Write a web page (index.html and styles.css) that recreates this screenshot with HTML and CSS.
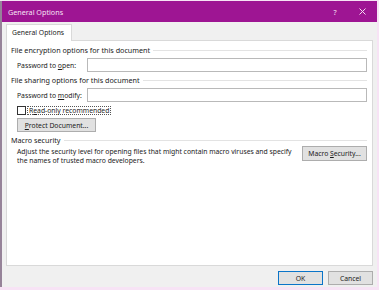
FILE: index.html
```html
<!DOCTYPE html>
<html lang="en">
<head>
    <meta charset="UTF-8">
    <title>General Options</title>
    <link rel="stylesheet" href="styles.css">
</head>
<body>
    <div class="window">
        <!-- Title Bar -->
        <div class="titlebar">
            <span class="title">General Options</span>
            <span class="help">?</span>
            <span class="close">
                <svg width="7" height="7" viewBox="0 0 7 7"><path d="M0.5 0.5L6.5 6.5M6.5 0.5L0.5 6.5" stroke="#f4dcf1" stroke-width="1"/></svg>
            </span>
        </div>

        <div class="dialog-body">
            <div class="tabs">
                <div class="tab">General Options</div>
            </div>

            <div class="panel">
                <div class="group-title"><span>File encryption options for this document</span></div>
                <div class="field">
                    <label>Password to <u>o</u>pen:</label>
                    <input type="password">
                </div>

                <div class="group-title second"><span>File sharing options for this document</span></div>
                <div class="field">
                    <label>Password to <u>m</u>odify:</label>
                    <input type="password">
                </div>

                <div class="check-row">
                    <span class="checkbox"></span>
                    <span class="check-label">R<u>e</u>ad-only recommended</span>
                </div>
                <button class="btn protect"><u>P</u>rotect Document...</button>

                <div class="group-title macro"><span>Macro security</span></div>
                <div class="macro-row">
                    <p class="macro-text">Adjust the security level for opening files that might contain macro viruses and specify the names of trusted macro developers.</p>
                    <button class="btn macro-btn">Macro <u>S</u>ecurity...</button>
                </div>
            </div>

            <!-- Footer Buttons -->
            <div class="footer">
                <button class="btn ok">OK</button>
                <button class="btn">Cancel</button>
            </div>
        </div>
    </div>
</body>
</html>
```

FILE: styles.css
```css
* {
    margin: 0;
    padding: 0;
    box-sizing: border-box;
}

body {
    font-family: 'Noto Sans', 'Open Sans', sans-serif;
    font-size: 6.8px;
    color: #1a1a1a;
    background: #f7e3f5;
    width: 379px;
    height: 290px;
    overflow: hidden;
    padding-top: 1px;
}

.window {
    width: 377px;
    height: 286px;
    border-left: 2px solid #968399;
    display: flex;
    flex-direction: column;
}

/* Title Bar */
.titlebar {
    height: 21px;
    background: #9e1593;
    color: #f7e4f4;
    display: flex;
    align-items: center;
    padding-left: 6px;
    font-size: 7.2px;
}

.title {
    flex: 1;
}

.help {
    width: 10px;
    text-align: center;
    margin-right: 19px;
}

.close {
    display: flex;
    margin-right: 11px;
}

/* Dialog Body */
.dialog-body {
    flex: 1;
    background: #f0f0f0;
    padding: 2px 4px 0 4px;
    display: flex;
    flex-direction: column;
}

.tabs {
    display: flex;
    height: 16px;
}

.tab {
    width: 66px;
    height: 17px;
    background: #fff;
    border: 1px solid #d9d9d9;
    border-bottom: none;
    padding-left: 5px;
    line-height: 15px;
    position: relative;
    z-index: 1;
}

.panel {
    height: 226px;
    background: #fff;
    border: 1px solid #d9d9d9;
    padding: 5px 5px 0 4px;
}

.group-title {
    display: flex;
    align-items: center;
    height: 9px;
    line-height: 9px;
    font-size: 7.2px;
}

.group-title::after {
    content: '';
    flex: 1;
    height: 1px;
    background: #e3e3e3;
    margin-left: 3px;
}

.group-title.second {
    margin-top: 4px;
}

.group-title.macro {
    margin-top: 4px;
}

.field {
    display: flex;
    align-items: center;
    margin-top: 3px;
    padding-left: 6px;
}

.field label {
    width: 70px;
}

.field input {
    flex: 1;
    height: 14px;
    border: 1px solid #b9b9b9;
    background: #fff;
}

.check-row {
    display: flex;
    align-items: center;
    margin-top: 4px;
    padding-left: 6px;
    height: 9px;
}

.checkbox {
    width: 9px;
    height: 9px;
    border: 1px solid #333;
    background: #fff;
}

.check-label {
    margin-left: 1px;
    border: 1px dotted #555;
    padding: 0 1px;
    line-height: 7px;
}

.btn {
    font-family: inherit;
    font-size: 6.8px;
    color: #1a1a1a;
    background: #e1e1e1;
    border: 1px solid #adadad;
    height: 14px;
    cursor: pointer;
}

.protect {
    display: block;
    margin: 3px 0 0 6px;
    width: 79px;
}

.macro-row {
    display: flex;
    align-items: flex-start;
    margin-top: 1px;
    padding-left: 6px;
}

.macro-text {
    flex: 1;
    line-height: 9px;
    padding-top: 1px;
}

.macro-btn {
    width: 65px;
    height: 15px;
    margin-left: 8px;
}

/* Footer */
.footer {
    flex: 1;
    display: flex;
    justify-content: flex-end;
    align-items: flex-start;
    gap: 5px;
    padding-top: 5px;
}

.footer .btn {
    width: 45px;
    height: 14px;
}

.btn.ok {
    border-color: #0a74c8;
}
```
